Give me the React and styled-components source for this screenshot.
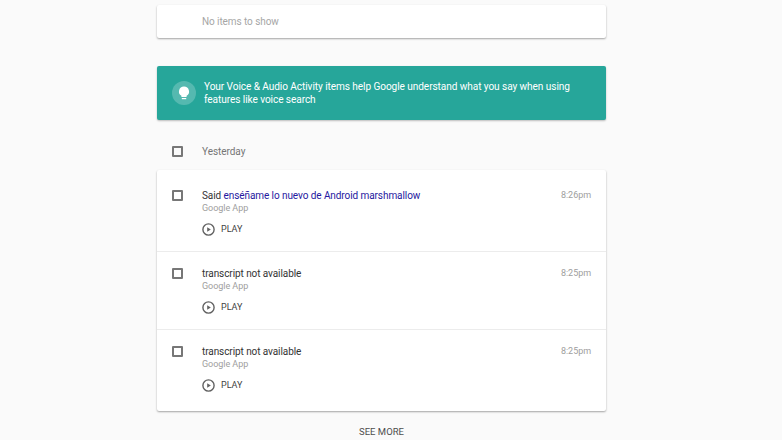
import React from 'react';
import styled, { createGlobalStyle } from 'styled-components';

const GlobalStyle = createGlobalStyle`
  html, body {
    margin: 0;
    height: 440px;
    overflow: hidden;
    background: #fafafa;
    font-family: Roboto, "Liberation Sans", sans-serif;
  }
`;

const Page = styled.div`
  width: 449px;
  margin: 0 auto 0 157px;
  padding-top: 5px;
`;

const Card = styled.div`
  background: #fff;
  border-radius: 2px;
  box-shadow: 0 1px 2px rgba(0, 0, 0, 0.35);
`;

const EmptyCard = styled(Card)`
  height: 33px;
  padding-left: 45px;
  font-size: 10px;
  letter-spacing: -0.08px;
  line-height: 33px;
  color: #a6a6a6;
`;

const Banner = styled.div`
  display: flex;
  align-items: center;
  height: 54px;
  margin-top: 28px;
  padding-left: 15px;
  background: #26a69a;
  border-radius: 2px;
  box-shadow: 0 1px 2px rgba(0, 0, 0, 0.25);
`;

const BulbCircle = styled.div`
  display: flex;
  align-items: center;
  justify-content: center;
  width: 24px;
  height: 24px;
  margin-right: 8px;
  border-radius: 50%;
  background: rgba(255, 255, 255, 0.22);
`;

const BannerText = styled.div`
  font-size: 10.1px;
  letter-spacing: -0.08px;
  line-height: 13px;
  color: #fff;
  width: 375px;
`;

const DayHeader = styled.div`
  display: flex;
  align-items: center;
  box-sizing: border-box;
  height: 50px;
  padding: 12px 0 0 15px;
  font-size: 10px;
  letter-spacing: -0.05px;
  color: #757575;
`;

const Check = styled.span`
  flex: none;
  box-sizing: border-box;
  width: 11px;
  height: 11px;
  margin-right: 19px;
  border: 2px solid #777;
  border-radius: 1px;
`;

const RowCheck = styled(Check)`
  margin-top: 1px;
`;

const Row = styled.div`
  display: flex;
  align-items: flex-start;
  height: ${(p) => p.$height}px;
  padding: ${(p) => p.$top}px 15px 0;
  box-sizing: border-box;
  border-bottom: ${(p) => (p.$last ? 'none' : '1px solid #ececec')};
`;

const Body = styled.div`
  flex: 1;
`;

const Title = styled.div`
  font-size: 10px;
  letter-spacing: -0.08px;
  line-height: 13px;
  color: #333;
`;

const Query = styled.span`
  color: #2518a0;
`;

const Source = styled.div`
  font-size: 9px;
  letter-spacing: -0.04px;
  line-height: 13px;
  color: #9e9e9e;
`;

const Play = styled.div`
  display: flex;
  align-items: center;
  gap: 6px;
  margin-top: 8px;
  font-size: 9px;
  letter-spacing: -0.05px;
  line-height: 13px;
  color: #424242;
`;

const Time = styled.div`
  font-size: 9px;
  letter-spacing: -0.05px;
  line-height: 13px;
  color: #9e9e9e;
`;

const SeeMore = styled.div`
  margin-top: 14px;
  text-align: center;
  font-size: 9.5px;
  line-height: 13px;
  color: #4e4e4e;
`;

const PlayIcon = () => (
  <svg width="13" height="13" viewBox="0 0 13 13">
    <circle cx="6.5" cy="6.5" r="5.6" fill="none" stroke="#616161" strokeWidth="1.4" />
    <path d="M5.2 4.2 8.8 6.5 5.2 8.8Z" fill="#616161" />
  </svg>
);

const BulbIcon = () => (
  <svg width="12" height="15" viewBox="0 0 12 15">
    <path d="M6 0.5a5 5 0 0 0-2.6 9.3V11h5.2V9.8A5 5 0 0 0 6 0.5Z" fill="#fff" />
    <rect x="3.8" y="12" width="4.4" height="1.2" fill="#fff" />
  </svg>
);

const items = [
  { id: 1, time: '8:26pm', height: 82, top: 19, query: 'enséñame lo nuevo de Android marshmallow' },
  { id: 2, time: '8:25pm', height: 78, top: 15 },
  { id: 3, time: '8:25pm', height: 81, top: 15, last: true },
];

const App = () => (
  <>
    <GlobalStyle />
    <Page>
      <EmptyCard>No items to show</EmptyCard>
      <Banner>
        <BulbCircle>
          <BulbIcon />
        </BulbCircle>
        <BannerText>
          Your Voice &amp; Audio Activity items help Google understand what you say when using features like voice search
        </BannerText>
      </Banner>
      <DayHeader>
        <Check />
        Yesterday
      </DayHeader>
      <Card>
        {items.map((item) => (
          <Row key={item.id} $height={item.height} $top={item.top} $last={item.last}>
            <RowCheck />
            <Body>
              <Title>
                {item.query ? (
                  <>
                    Said <Query>{item.query}</Query>
                  </>
                ) : (
                  'transcript not available'
                )}
              </Title>
              <Source>Google App</Source>
              <Play>
                <PlayIcon />
                PLAY
              </Play>
            </Body>
            <Time>{item.time}</Time>
          </Row>
        ))}
      </Card>
      <SeeMore>SEE MORE</SeeMore>
    </Page>
  </>
);

export default App;
